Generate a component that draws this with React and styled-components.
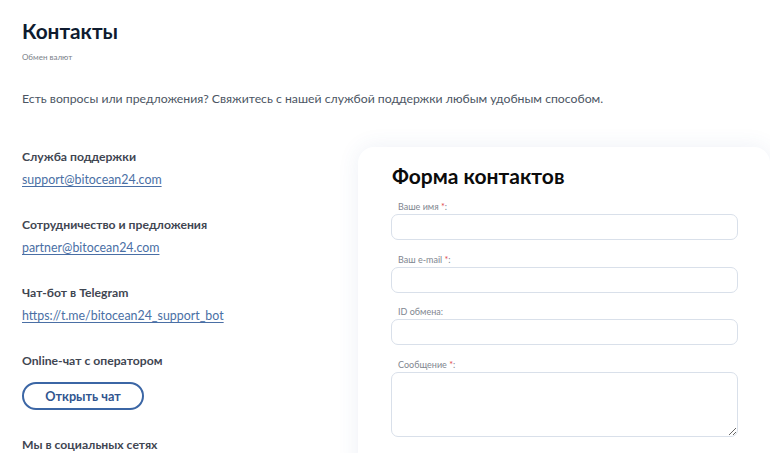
import React from "react";
import styled, { createGlobalStyle } from "styled-components";

const Global = createGlobalStyle`
  html, body { margin: 0; padding: 0; background: #ffffff; }
  body { font-family: Lato, "Noto Sans", sans-serif; overflow: hidden; }
  * { box-sizing: border-box; }
`;

const Page = styled.div`
  width: 770px;
  height: 453px;
  overflow: hidden;
  padding: 17px 0 0 22px;
`;

const Title = styled.h1`
  margin: 0;
  font-size: 20.8px;
  line-height: 28px;
  font-weight: 700;
  color: #0e1b2f;
`;

const Crumb = styled.div`
  margin-top: 6px;
  font-size: 8px;
  line-height: 12px;
  color: #7b818a;
`;

const Intro = styled.p`
  margin: 26px 0 0;
  font-size: 12.25px;
  line-height: 20px;
  color: #4b5563;
`;

const Row = styled.div`
  margin-top: 38px;
  display: flex;
  align-items: flex-start;
`;

const Left = styled.div`
  width: 336px;
  flex: none;
  display: flex;
  flex-direction: column;
`;

const Group = styled.div`
  display: flex;
  flex-direction: column;
  gap: ${(p) => p.$gap || 3}px;
  margin-bottom: ${(p) => p.$after || 25}px;
`;

const Heading = styled.div`
  font-size: 12.2px;
  line-height: 20px;
  font-weight: 700;
  color: #3f4652;
`;

const Link = styled.a`
  font-size: 12.4px;
  line-height: 20px;
  color: #4a6fa5;
  text-decoration: underline;
  text-underline-offset: 2px;
  width: fit-content;
`;

const ChatButton = styled.button`
  width: 122px;
  height: 28px;
  border: 2px solid #3b66a5;
  border-radius: 14px;
  background: #fff;
  color: #30558f;
  font-family: inherit;
  font-size: 12.7px;
  font-weight: 700;
  padding: 0;
  cursor: pointer;
`;

const Card = styled.div`
  width: 412px;
  flex: none;
  background: #fff;
  border-radius: 16px;
  box-shadow: 0 0 22px rgba(60, 90, 160, 0.09);
  padding: 15px 32px 30px 33px;
  display: flex;
  flex-direction: column;
`;

const CardTitle = styled.h2`
  margin: 0 0 11px 1px;
  font-size: 21px;
  line-height: 28px;
  font-weight: 700;
  color: #0b0b0b;
`;

const Field = styled.div`
  display: flex;
  flex-direction: column;
  gap: 1px;
  margin-bottom: 13.5px;
`;

const Label = styled.label`
  padding-left: 7px;
  font-size: 9px;
  line-height: 12px;
  color: #80868f;
`;

const Req = styled.span`
  color: #e0474c;
`;

const Input = styled.input`
  width: 100%;
  height: 26px;
  border: 1.5px solid #d9e0ea;
  border-radius: 7px;
  background: #fff;
  outline: none;
`;

const TextArea = styled.textarea`
  width: 100%;
  height: 65px;
  border: 1.5px solid #d9e0ea;
  border-radius: 7px;
  background: #fff;
  outline: none;
  display: block;
`;

const contacts = [
  { h: "Служба поддержки", l: "support@bitocean24.com" },
  { h: "Сотрудничество и предложения", l: "partner@bitocean24.com" },
  { h: "Чат-бот в Telegram", l: "https://t.me/bitocean24_support_bot" },
];

export default function App() {
  return (
    <>
      <Global />
      <Page>
        <Title>Контакты</Title>
        <Crumb>Обмен валют</Crumb>
        <Intro>
          Есть вопросы или предложения? Свяжитесь с нашей службой поддержки любым удобным способом.
        </Intro>
        <Row>
          <Left>
            {contacts.map((c) => (
              <Group key={c.h}>
                <Heading>{c.h}</Heading>
                <Link href="#">{c.l}</Link>
              </Group>
            ))}
            <Group $gap={11} $after={25}>
              <Heading>Online-чат с оператором</Heading>
              <ChatButton>Открыть чат</ChatButton>
            </Group>
            <Group>
              <Heading>Мы в социальных сетях</Heading>
            </Group>
          </Left>
          <Card>
            <CardTitle>Форма контактов</CardTitle>
            <Field>
              <Label>
                Ваше имя <Req>*</Req>:
              </Label>
              <Input />
            </Field>
            <Field>
              <Label>
                Ваш e-mail <Req>*</Req>:
              </Label>
              <Input />
            </Field>
            <Field>
              <Label>ID обмена:</Label>
              <Input />
            </Field>
            <Field>
              <Label>
                Сообщение <Req>*</Req>:
              </Label>
              <TextArea />
            </Field>
          </Card>
        </Row>
      </Page>
    </>
  );
}
